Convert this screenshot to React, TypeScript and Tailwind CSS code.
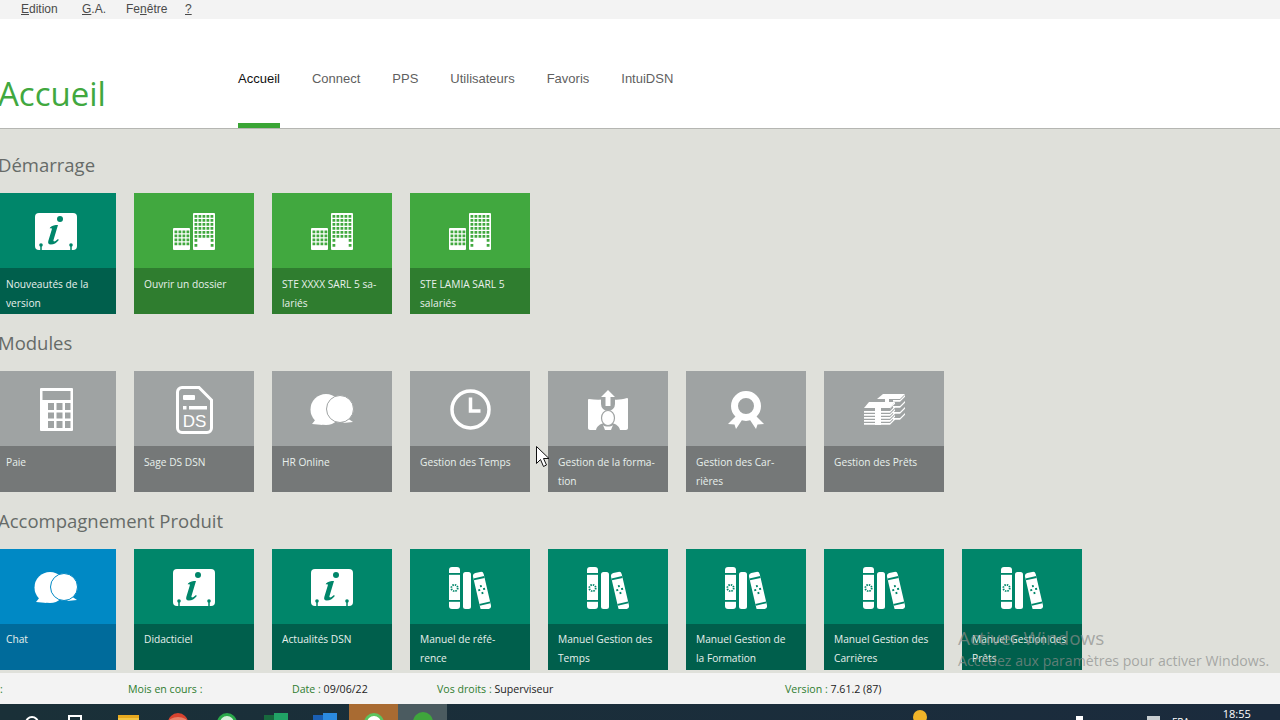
import type { ReactNode } from "react";

const TEAL = "#00866a";
const GREY = "#9fa3a3";
const BLUE = "#0089c5";

const tones = {
  teal: { top: "bg-[#00866a]", bottom: "bg-[#005f4c]" },
  green: { top: "bg-[#41a83f]", bottom: "bg-[#2f7d2f]" },
  grey: { top: "bg-[#9fa3a3]", bottom: "bg-[#757878]" },
  blue: { top: "bg-[#0089c5]", bottom: "bg-[#006b9b]" },
};

const InfoIcon = () => (
  <svg width="42" height="37" viewBox="0 0 42 37">
    <rect width="42" height="37" rx="4" fill="#fff" />
    <circle cx="25" cy="6" r="3" fill={TEAL} />
    <path d="M15 14.500c2-2 5-2.500 8-2.500l-4.500 15c-.4 1.500.6 1.700 2 1l2.500-2 .8 1c-2.500 3-4.800 4.500-8 4.500-2.500 0-3-1.500-2.500-3.500l3.500-11.500c.3-1.200-.5-1.500-2-1z" fill={TEAL} />
    <path d="M6 37v-5M36 37v-5" stroke={TEAL} strokeWidth="1.500" />
    <circle cx="6" cy="32" r="1.800" fill={TEAL} />
    <circle cx="36" cy="32" r="1.800" fill={TEAL} />
  </svg>
);

// building outlines with their windows cut out
const windows = (x0: number, y0: number, cols: number, rows: number) => {
  let d = "";
  for (let r = 0; r < rows; r++) {
    for (let c = 0; c < cols; c++) {
      d += `M${x0 + c * 4} ${y0 + r * 4}h2.800v2.800h-2.800z`;
    }
  }
  return d;
};

const BuildingIcon = () => (
  <svg width="42" height="37" viewBox="0 0 42 37">
    <path
      fillRule="evenodd"
      fill="#fff"
      d={`M1 15h15a1 1 0 0 1 1 1v20a1 1 0 0 1-1 1H1a1 1 0 0 1-1-1V16a1 1 0 0 1 1-1z${windows(1.500, 17.500, 4, 4)}`}
    />
    <path
      fillRule="evenodd"
      fill="#fff"
      d={`M21 0h20a1 1 0 0 1 1 1v35a1 1 0 0 1-1 1H21a1 1 0 0 1-1-1V1a1 1 0 0 1 1-1z${windows(21.500, 2, 5, 6)}M21.500 26h2.800v2.800h-2.800zM21.500 31h2.800v2.800h-2.800zM37.700 26h2.800v2.800h-2.800zM37.700 31h2.800v2.800h-2.800z`}
    />
  </svg>
);

const CalculatorIcon = () => (
  <svg width="33" height="43" viewBox="0 0 33 43">
    <path
      fillRule="evenodd"
      fill="#fff"
      d="M1 0h31a1 1 0 0 1 1 1v41a1 1 0 0 1-1 1H1a1 1 0 0 1-1-1V1a1 1 0 0 1 1-1zM2.500 3v9h28V3zM8 15v7h6v-7zM16.500 15v7h6v-7zM25 15v7h5.500v-7zM8 24.500v6h6v-6zM16.500 24.500v6h6v-6zM25 24.500v6h5.500v-6zM8 33v7h6v-7zM16.500 33v7h6v-7zM25 33v7h5.500v-7z"
    />
  </svg>
);

const DocIcon = () => (
  <svg width="37" height="48" viewBox="0 0 37 48">
    <path d="M6 1.500h17l12.500 12.500v28a4.500 4.500 0 0 1-4.500 4.500H6A4.500 4.500 0 0 1 1.500 42V6A4.500 4.500 0 0 1 6 1.500z" fill="none" stroke="#fff" strokeWidth="3" />
    <rect x="7" y="9" width="12" height="5" rx="1" fill="#fff" />
    <rect x="7" y="20" width="3.500" height="3.500" fill="#fff" />
    <rect x="13" y="20" width="18" height="3.500" fill="#fff" />
    <text x="18.500" y="41" textAnchor="middle" fontSize="17" fontFamily="Liberation Sans, sans-serif" fill="#fff">DS</text>
  </svg>
);

const ChatIcon = ({ ring }: { ring: string }) => (
  <svg width="44" height="32" viewBox="0 0 44 32">
    <circle cx="16" cy="15.500" r="15.500" fill="#fff" />
    <path d="M6 25l-4 5 11 1z" fill="#fff" />
    <path d="M37 24l6 4-10 1z" fill="#fff" />
    <circle cx="30" cy="15" r="13.500" fill="#fff" stroke={ring} strokeWidth="1" />
  </svg>
);

const ClockIcon = () => (
  <svg width="41" height="41" viewBox="0 0 41 41">
    <circle cx="20.500" cy="20.500" r="18.500" fill="none" stroke="#fff" strokeWidth="3.500" />
    <path d="M20.500 8.500v13.500h10" fill="none" stroke="#fff" strokeWidth="3.500" />
  </svg>
);

const FormationIcon = () => (
  <svg width="40" height="40" viewBox="0 0 40 40">
    <path d="M1 9c6 1 12 1 19 0 7 1 13 1 19-1 .5 0 1 .5 1 1v29c0 1-1 2-2 2H2c-1 0-2-1-2-2V10c0-.5.5-1 1-1z" fill="#fff" />
    <path d="M13 6h14v8a7 7 0 0 1-14 0z" fill={GREY} />
    <path d="M20 0l7 7h-4.500v9h-5V7H13z" fill="#fff" />
    <path d="M8 40c1-4 4-6 8-7h8c4 1 7 3 8 7z" fill={GREY} />
    <ellipse cx="20" cy="28" rx="6.500" ry="7.500" fill="#fff" stroke={GREY} strokeWidth="1.200" />
    <path d="M15 35c2 2 8 2 10 0l-2 5h-6z" fill="#fff" />
  </svg>
);

const RibbonIcon = () => (
  <svg width="36" height="38" viewBox="0 0 36 38">
    <circle cx="18" cy="15" r="11.500" fill="none" stroke="#fff" strokeWidth="7" />
    <path d="M8 25L0 33l6.500 .5L8 38l6-9z" fill="#fff" />
    <path d="M28 25l8 8-6.500 .5L28 38l-6-9z" fill="#fff" />
  </svg>
);

const MoneyIcon = () => {
  const front = [17, 20, 23, 26, 29];
  const back = [6, 9, 12, 15];
  return (
    <svg width="41" height="31" viewBox="0 0 41 31">
      {/* back stack */}
      <path d="M19 0h22l-5 5H13z" fill="#fff" />
      {back.map((y) => (
        <path key={y} d={`M29 ${y}h7l5-5v1.800l-5 5h-7z`} transform={`translate(0 ${y - 6})`} fill="#fff" />
      ))}
      {/* front stack */}
      <path d="M5 8h26l-5 6H0z" fill="#fff" />
      <path d="M31 8v1.800l-5 5V14z" fill="#fff" />
      {front.map((y) => (
        <path key={y} d={`M0 ${y}h26l5-5v1.800l-5 5H0z`} fill="#fff" />
      ))}
      <rect x="11" y="11" width="6" height="20" fill="#fff" />
      <rect x="21" y="1" width="4" height="7" fill="#fff" />
    </svg>
  );
};

const BooksIcon = () => (
  <svg width="42" height="42" viewBox="0 0 42 42">
    <rect x="0" y="0" width="11" height="42" rx="3" fill="#fff" />
    <rect x="0" y="6" width="11" height="1.800" fill={TEAL} />
    <rect x="0" y="33" width="11" height="1.800" fill={TEAL} />
    <circle cx="5.500" cy="21" r="3.200" fill="none" stroke={TEAL} strokeWidth="1.800" strokeDasharray="1.500 1" />
    <rect x="14" y="5" width="8" height="37" rx="2.500" fill="#fff" />
    <g transform="rotate(-13 33 24)">
      <rect x="27.500" y="5" width="11" height="38" rx="3" fill="#fff" />
      <rect x="27.500" y="10" width="11" height="1.800" fill={TEAL} />
      <rect x="27.500" y="36" width="11" height="1.800" fill={TEAL} />
      <path d="M33 18v2M33 25v2M29.500 22.500h2M34.500 22.500h2" stroke={TEAL} strokeWidth="1.800" />
    </g>
  </svg>
);

type TileProps = { tone: keyof typeof tones; icon: ReactNode; lines: string[]; short?: boolean };

const Tile = ({ tone, icon, lines, short }: TileProps) => (
  <div className="w-[120px] h-[121px] shrink-0 flex flex-col">
    <div className={`${short ? "h-[75px]" : "h-[76px]"} pt-[2px] flex items-center justify-center ${tones[tone].top}`}>{icon}</div>
    <div className={`h-[46px] pl-[10px] ${short ? "pt-[6px]" : "pt-[7px]"} text-[10.200px] leading-[19px] text-[#e8f0ec] ${tones[tone].bottom}`}>
      {lines.map((l) => (
        <div key={l} className="whitespace-nowrap">{l}</div>
      ))}
    </div>
  </div>
);

const Section = ({ title, children }: { title: string; children: ReactNode }) => (
  <section>
    <h2 className="h-[57px] flex items-center -ml-[2px] text-[18.500px] text-[#666b68]">{title}</h2>
    <div className="flex gap-[18px] -ml-[4px]">{children}</div>
  </section>
);

const Mnemonic = ({ first, rest, pre }: { first: string; rest?: string; pre?: string }) => (
  <span>
    {pre}
    <span className="underline">{first}</span>
    {rest}
  </span>
);

const Cell = ({ children, active }: { children?: ReactNode; active?: string }) => (
  <div className={`w-[49px] h-full flex justify-center pt-[9px] ${active ?? ""}`}>{children}</div>
);

export default function App() {
  const info = <InfoIcon />;
  const building = <BuildingIcon />;
  const books = <BooksIcon />;
  return (
    <div className="relative w-[1280px] h-[720px] overflow-hidden flex flex-col bg-[#dfe0da] font-['Open_Sans',sans-serif]">
      {/* menu */}
      <div className="h-[19px] shrink-0 flex items-center pl-[21px] pb-[2px] bg-[#f3f3f3] text-[12px] text-[#4a4a4a] font-['Liberation_Sans',sans-serif]">
        <div className="w-[61px]"><Mnemonic first="E" rest="dition" /></div>
        <div className="w-[44px]"><Mnemonic first="G" rest=".A." /></div>
        <div className="w-[59px]"><Mnemonic pre="Fe" first="n" rest="être" /></div>
        <div className="underline">?</div>
      </div>

      {/* header */}
      <header className="h-[110px] shrink-0 flex bg-white border-b border-[#b5b6b2]">
        <div className="w-[238px] pt-[51px] shrink-0 text-[33px] leading-[48px] text-[#41a83f]">
          <span className="block -ml-[2px]">Accueil</span>
        </div>
        <nav className="flex gap-[32px] text-[13px] text-[#5f5f5f] font-['Liberation_Sans',sans-serif]">
          <div className="h-full pt-[50px] border-b-[5px] border-[#3aa535] text-[#111]">Accueil</div>
          <div className="pt-[50px]">Connect</div>
          <div className="pt-[50px]">PPS</div>
          <div className="pt-[50px]">Utilisateurs</div>
          <div className="pt-[50px]">Favoris</div>
          <div className="pt-[50px]">IntuiDSN</div>
        </nav>
      </header>

      {/* tiles */}
      <main className="flex-1 min-h-0 overflow-hidden pt-[7px]">
        <Section title="Démarrage">
          <Tile tone="teal" icon={info} lines={["Nouveautés de la", "version"]} />
          <Tile tone="green" icon={building} lines={["Ouvrir un dossier"]} />
          <Tile tone="green" icon={building} lines={["STE XXXX SARL 5 sa-", "lariés"]} />
          <Tile tone="green" icon={building} lines={["STE LAMIA SARL 5", "salariés"]} />
        </Section>
        <Section title="Modules">
          <Tile tone="grey" icon={<CalculatorIcon />} lines={["Paie"]} />
          <Tile tone="grey" icon={<DocIcon />} lines={["Sage DS DSN"]} />
          <Tile tone="grey" icon={<ChatIcon ring={GREY} />} lines={["HR Online"]} />
          <Tile tone="grey" icon={<ClockIcon />} lines={["Gestion des Temps"]} />
          <Tile tone="grey" icon={<FormationIcon />} lines={["Gestion de la forma-", "tion"]} />
          <Tile tone="grey" icon={<RibbonIcon />} lines={["Gestion des Car-", "rières"]} />
          <Tile tone="grey" icon={<MoneyIcon />} lines={["Gestion des Prêts"]} />
        </Section>
        <Section title="Accompagnement Produit">
          <Tile short tone="blue" icon={<ChatIcon ring={BLUE} />} lines={["Chat"]} />
          <Tile short tone="teal" icon={info} lines={["Didacticiel"]} />
          <Tile short tone="teal" icon={info} lines={["Actualités DSN"]} />
          <Tile short tone="teal" icon={books} lines={["Manuel de réfé-", "rence"]} />
          <Tile short tone="teal" icon={books} lines={["Manuel Gestion des", "Temps"]} />
          <Tile short tone="teal" icon={books} lines={["Manuel Gestion de", "la Formation"]} />
          <Tile short tone="teal" icon={books} lines={["Manuel Gestion des", "Carrières"]} />
          <Tile short tone="teal" icon={books} lines={["Manuel Gestion des", "Prêts"]} />
        </Section>
      </main>

      {/* status bar */}
      <footer className="h-[31px] shrink-0 flex items-center pt-[2px] bg-[#f3f3f3] text-[10.600px] text-[#222] whitespace-nowrap">
        <div className="w-[128px] text-[#2f7d2f]">:</div>
        <div className="w-[164px] text-[#2f7d2f]">Mois en cours :</div>
        <div className="w-[145px]"><span className="text-[#2f7d2f]">Date :</span> 09/06/22</div>
        <div className="w-[348px]"><span className="text-[#2f7d2f]">Vos droits :</span> Superviseur</div>
        <div><span className="text-[#2f7d2f]">Version :</span> 7.61.2 (87)</div>
      </footer>

      {/* taskbar */}
      <div className="h-[16px] shrink-0 flex items-start overflow-hidden bg-gradient-to-r from-[#1a3038] to-[#1b2b3d] text-white">
        <div className="w-[48px] ml-[8px] h-full flex justify-center pt-[12px]">
          <div className="w-[14px] h-[14px] rounded-full border-2 border-white" />
        </div>
        <div className="w-[38px] h-full flex justify-center pt-[11px]">
          <div className="w-[14px] h-[12px] border-t-2 border-x-2 border-white" />
        </div>
        <div className="ml-[10px] flex h-full">
          <Cell>
            <div className="w-[21px] h-[16px] mt-[2px] bg-[#f4c542] border-t-[3px] border-[#e8a91f]" />
          </Cell>
          <Cell><div className="w-[20px] h-[20px] rounded-full border-t-[4px] border-[#d9432f] bg-[#e8826a]" /></Cell>
          <Cell><div className="w-[20px] h-[20px] rounded-full border-[3px] border-[#2aa84a] bg-[#d5efd9]" /></Cell>
          <Cell>
            <div className="w-[24px] h-[16px] flex items-start">
              <div className="w-[10px] h-[16px] mt-[2px] bg-[#17693d]" />
              <div className="w-[14px] h-[16px] bg-[#21a366]" />
            </div>
          </Cell>
          <Cell>
            <div className="w-[24px] h-[16px] flex items-start">
              <div className="w-[10px] h-[16px] mt-[2px] bg-[#1a5fb4]" />
              <div className="w-[14px] h-[16px] bg-[#2b8ae0]" />
            </div>
          </Cell>
          <Cell active="bg-[#a96b32]"><div className="w-[20px] h-[20px] rounded-full border-[3px] border-[#5cc45e] bg-white" /></Cell>
          <Cell active="bg-[#4b5b60]"><div className="w-[20px] h-[20px] -mt-[1px] rounded-full bg-[#3fa63c]" /></Cell>
        </div>
        <div className="ml-[466px] mt-[6px] w-[14px] h-[14px] rounded-full bg-[#f0b429]" />
        <div className="ml-[149px] mt-[12px] w-[7px] h-[8px] bg-white" />
        <div className="ml-[64px] mt-[12px] w-[13px] h-[8px] bg-[#c9ced1]" />
        <div className="ml-[12px] mt-[12px] text-[10px] leading-[12px]">FRA</div>
        <div className="ml-[33px] mt-[3px] text-[11px] leading-[14px]">18:55</div>
      </div>

      {/* windows activation watermark */}
      <div className="absolute left-[958px] top-[626px] text-[#8b8d8a]/70 pointer-events-none whitespace-nowrap">
        <div className="text-[19px] leading-[24px]">Activer Windows</div>
        <div className="text-[14.100px] leading-[22px]">Accédez aux paramètres pour activer Windows.</div>
      </div>

      {/* mouse pointer */}
      <svg className="absolute left-[536px] top-[446px]" width="13" height="22" viewBox="0 0 13 22">
        <path d="M.5 .5v17l4-4 3 7 3-1.500-3-6.500h5.500z" fill="#fff" stroke="#111" strokeWidth="1" />
      </svg>
    </div>
  );
}
